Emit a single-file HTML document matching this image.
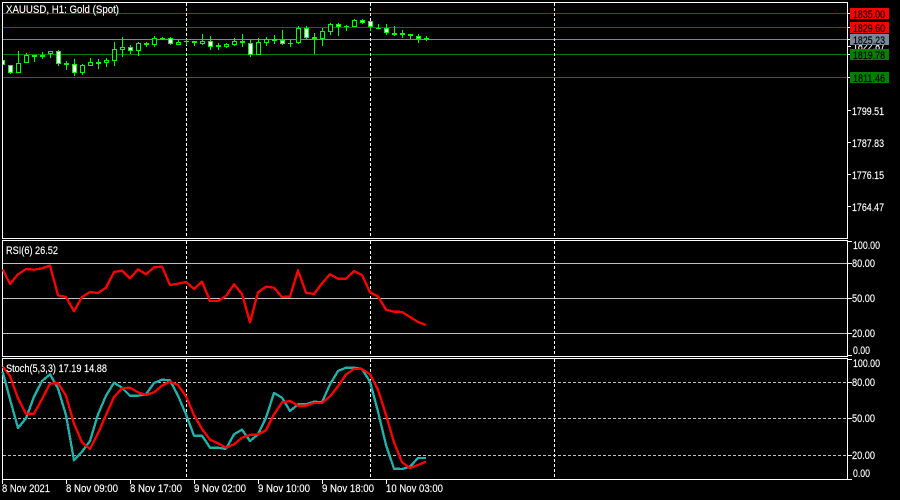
<!DOCTYPE html>
<html><head><meta charset="utf-8"><style>
html,body{margin:0;padding:0;background:#000;width:900px;height:500px;overflow:hidden}
svg{display:block}
text{font-family:"Liberation Sans",sans-serif;font-size:11px;fill:#fff;stroke:#fff;stroke-width:.15px}
.b{fill:#000}
</style></head><body>
<svg width="900" height="500" viewBox="0 0 900 500" xmlns="http://www.w3.org/2000/svg">
<rect width="900" height="500" fill="#000"/>
<g shape-rendering="crispEdges">
<path d="M3 13.5H847M3 27.5H847" stroke="#e00000"/>
<path d="M3 39.5H847" stroke="#778899"/>
<path d="M3 54.5H847M3 77.5H847" stroke="#008000"/>
<path d="M3 263.5H847M3 298.5H847M3 333.5H847" stroke="#c0c0c0"/>
<path d="M3 382.5H847M3 418.5H847M3 455.5H847" stroke="#c0c0c0" stroke-dasharray="3 2"/>
<path d="M186.5 3V238M370.5 3V238M554.5 3V238M186.5 241V356M370.5 241V356M554.5 241V356M186.5 359V479M370.5 359V479M554.5 359V479" stroke="#fff" stroke-dasharray="3 2"/>
<path stroke="#00ff00" fill="none" d="M2.500 60V66M10.500 65V74M18.500 51V73M26.500 53V63M34.500 55V62M42.500 52V59M50.500 51V58M58.500 50V66M66.500 61V70M74.500 59V76M82.500 64V75M90.500 58V66M98.500 59V69M106.500 58V67M114.500 42V66M122.500 37V57M130.500 45V54M138.500 42V56M146.500 42V47M154.500 36V47M162.500 37V40M170.500 37V45M178.500 40V45M186.500 39V45M194.500 41V46M202.500 34V45M210.500 36V50M218.500 43V50M226.500 43V48M234.500 38V46M242.500 34V47M250.500 40V57M258.500 38V55M266.500 37V46M274.500 35V44M282.500 30V45M290.500 40V47M298.500 26V44M306.500 26V39M314.500 33V54M322.500 28V46M330.500 23V35M338.500 23V36M346.500 25V31M354.500 19V27M362.500 19V24M370.500 21V31M378.500 24V29M386.500 24V35M394.500 26V36M402.500 30V38M410.500 34V39M418.500 34V43M426.500 36V41"/>
<path stroke="#00ff00" fill="none" d="M96 63.500H101M96 62.500H101M184 41.500H189M216 46.500H221M216 45.500H221M272 40.500H277M272 39.500H277M288 43.500H293M312 38.500H317M312 37.500H317M344 26.500H349M376 28.500H381M400 34.500H405M400 33.500H405M424 39.500H429M424 38.500H429M64 63.500H69M64 64.500H69M144 43.500H149M144 44.500H149M160 38.500H165M392 33.500H397M392 34.500H397M32 55.500H37M32 56.500H37"/>
<g fill="#000" stroke="#00ff00">
<rect x="16.500" y="63.500" width="4" height="9"/>
<rect x="24.500" y="55.500" width="4" height="7"/>
<rect x="40.500" y="55.500" width="4" height="1"/>
<rect x="48.500" y="51.500" width="4" height="2"/>
<rect x="80.500" y="65.500" width="4" height="7"/>
<rect x="88.500" y="62.500" width="4" height="3"/>
<rect x="104.500" y="60.500" width="4" height="2"/>
<rect x="112.500" y="49.500" width="4" height="11"/>
<rect x="120.500" y="47.500" width="4" height="2"/>
<rect x="136.500" y="43.500" width="4" height="7"/>
<rect x="152.500" y="38.500" width="4" height="6"/>
<rect x="176.500" y="42.500" width="4" height="2"/>
<rect x="200.500" y="41.500" width="4" height="2"/>
<rect x="224.500" y="44.500" width="4" height="2"/>
<rect x="232.500" y="41.500" width="4" height="3"/>
<rect x="256.500" y="42.500" width="4" height="12"/>
<rect x="264.500" y="39.500" width="4" height="3"/>
<rect x="296.500" y="28.500" width="4" height="14"/>
<rect x="320.500" y="31.500" width="4" height="7"/>
<rect x="328.500" y="24.500" width="4" height="7"/>
<rect x="352.500" y="20.500" width="4" height="6"/>
</g>
<g fill="#fff" stroke="#00ff00">
<rect x="0.500" y="60.500" width="4" height="4"/>
<rect x="8.500" y="65.500" width="4" height="7"/>
<rect x="56.500" y="51.500" width="4" height="12"/>
<rect x="72.500" y="64.500" width="4" height="8"/>
<rect x="128.500" y="47.500" width="4" height="3"/>
<rect x="168.500" y="38.500" width="4" height="5"/>
<rect x="192.500" y="41.500" width="4" height="1"/>
<rect x="208.500" y="41.500" width="4" height="5"/>
<rect x="240.500" y="41.500" width="4" height="1"/>
<rect x="248.500" y="43.500" width="4" height="11"/>
<rect x="280.500" y="40.500" width="4" height="3"/>
<rect x="304.500" y="28.500" width="4" height="9"/>
<rect x="336.500" y="24.500" width="4" height="2"/>
<rect x="360.500" y="20.500" width="4" height="2"/>
<rect x="368.500" y="21.500" width="4" height="5"/>
<rect x="384.500" y="28.500" width="4" height="4"/>
<rect x="408.500" y="34.500" width="4" height="1"/>
<rect x="416.500" y="36.500" width="4" height="2"/>
</g>
<rect x="0" y="0" width="2" height="500" fill="#000"/>
<!-- frames -->
<g fill="none" stroke="#fff">
<rect x="2.500" y="2.500" width="845" height="236"/>
<rect x="2.500" y="240.500" width="845" height="116"/>
<path d="M2.500 358.500H847.500V479.500H2.500Z"/>
<path d="M847 46.500H851M847 110.500H851M847 142.500H851M847 174.500H851M847 206.500H851"/>
<path d="M847 13.500H850M847 27.500H850M847 39.500H850M847 54.500H850M847 77.500H850"/>
<path d="M847 241.500H852M847 263.500H852M847 298.500H852M847 333.500H852M847 355.500H852"/>
<path d="M847 359.500H852M847 382.500H852M847 418.500H852M847 455.500H852M847 479.500H852"/>
<path d="M2.500 480V484M66.500 480V484M130.500 480V484M194.500 480V484M258.500 480V484M322.500 480V484M386.500 480V484"/>
</g>
</g>
<!-- indicator lines -->
<g fill="none" stroke-width="7" shape-rendering="crispEdges" stroke-linejoin="round">
<polyline transform="translate(0 235) scale(.33333)" stroke="#ff0000" points="8,103 30,147 54,118 78,102 102,104 126,100 150,92 174,181 198,186 222,229 246,186 270,171 294,174 318,158 342,111 366,107 390,130 414,103 438,118 462,97 486,95 510,150 534,146 558,141 582,162 606,140 630,198 654,198 678,183 "/>
<polyline transform="translate(225 235) scale(.33333)" stroke="#ff0000" points="3,183 27,148 51,177 75,262 99,172 123,155 147,158 171,186 195,185 219,106 243,173 267,177 291,145 315,118 339,131 363,131 387,108 411,120 435,172 459,184 483,224 507,230 531,231 555,246 579,261 603,270"/>
<polyline transform="translate(0 355) scale(.33333)" stroke="#20b2aa" points="8,50 30,133 54,219 78,190 102,125 126,78 150,58 174,100 198,180 222,316 246,290 270,258 294,178 318,122 342,83 366,98 390,122 414,122 438,118 462,84 486,74 510,76 534,122 558,178 582,242 606,242 630,278 654,278 678,282"/>
<polyline transform="translate(225 355) scale(.33333)" stroke="#20b2aa" points="3,282 27,238 51,224 75,258 99,238 123,188 147,114 171,128 195,168 219,148 243,148 267,140 291,142 315,88 339,48 363,38 387,38 411,42 435,80 459,170 483,270 507,341 531,342 555,335 579,309 603,309"/>
<polyline transform="translate(0 355) scale(.33333)" stroke="#ff0000" points="8,35 30,63 54,130 78,176 102,176 126,132 150,86 174,84 198,122 222,206 246,262 270,282 294,235 318,180 342,126 366,100 390,98 414,112 438,120 462,112 486,92 510,80 534,90 558,124 582,180 606,222 630,254 654,265 678,278"/>
<polyline transform="translate(225 355) scale(.33333)" stroke="#ff0000" points="3,278 27,268 51,248 75,240 99,238 123,226 147,178 171,142 195,138 219,152 243,152 267,144 291,144 315,124 339,94 363,58 387,42 411,42 435,58 459,104 483,180 507,262 531,322 555,339 579,330 603,320"/>
</g>
<!-- labels -->
<text x="6" y="13" textLength="113" lengthAdjust="spacingAndGlyphs">XAUUSD, H1:  Gold (Spot)</text>
<text x="6" y="254" textLength="52" lengthAdjust="spacingAndGlyphs">RSI(6) 26.52</text>
<text x="6" y="372" textLength="101" lengthAdjust="spacingAndGlyphs">Stoch(5,3,3) 17.19 14.88</text>
<!-- price axis -->
<g>
<text x="853" y="50" textLength="32" lengthAdjust="spacingAndGlyphs">1822.87</text>
<text x="852" y="115" textLength="32" lengthAdjust="spacingAndGlyphs">1799.51</text>
<text x="852" y="147" textLength="32" lengthAdjust="spacingAndGlyphs">1787.83</text>
<text x="852" y="179" textLength="32" lengthAdjust="spacingAndGlyphs">1776.15</text>
<text x="852" y="211" textLength="32" lengthAdjust="spacingAndGlyphs">1764.47</text>
<text x="853" y="249" textLength="27" lengthAdjust="spacingAndGlyphs">100.00</text>
<text x="852" y="267" textLength="23" lengthAdjust="spacingAndGlyphs">80.00</text>
<text x="852" y="302" textLength="23" lengthAdjust="spacingAndGlyphs">50.00</text>
<text x="852" y="337" textLength="23" lengthAdjust="spacingAndGlyphs">20.00</text>
<text x="853" y="354" textLength="17" lengthAdjust="spacingAndGlyphs">0.00</text>
<text x="853" y="367" textLength="27" lengthAdjust="spacingAndGlyphs">100.00</text>
<text x="852" y="386" textLength="23" lengthAdjust="spacingAndGlyphs">80.00</text>
<text x="852" y="422" textLength="23" lengthAdjust="spacingAndGlyphs">50.00</text>
<text x="852" y="459" textLength="23" lengthAdjust="spacingAndGlyphs">20.00</text>
<text x="853" y="477" textLength="17" lengthAdjust="spacingAndGlyphs">0.00</text>
</g>
<g shape-rendering="crispEdges">
<rect x="850" y="8" width="39" height="11" fill="#ff0000"/>
<rect x="850" y="22" width="39" height="11" fill="#ff0000"/>
<rect x="850" y="34" width="39" height="11" fill="#778899"/>
<rect x="850" y="49" width="39" height="11" fill="#008000"/>
<rect x="850" y="72" width="39" height="11" fill="#008000"/>
</g>
<g>
<text style="fill:#000;stroke:#000" x="853" y="18" textLength="32" lengthAdjust="spacingAndGlyphs">1835.00</text>
<text style="fill:#000;stroke:#000" x="853" y="32" textLength="32" lengthAdjust="spacingAndGlyphs">1829.60</text>
<text style="fill:#000;stroke:#000" x="853" y="44" textLength="32" lengthAdjust="spacingAndGlyphs">1825.23</text>
<text style="fill:#000;stroke:#000" x="853" y="59" textLength="32" lengthAdjust="spacingAndGlyphs">1819.78</text>
<text style="fill:#000;stroke:#000" x="853" y="82" textLength="32" lengthAdjust="spacingAndGlyphs">1811.46</text>
</g>
<!-- time axis -->
<text x="2" y="492" textLength="48" lengthAdjust="spacingAndGlyphs">8 Nov 2021</text>
<text x="66" y="492" textLength="52" lengthAdjust="spacingAndGlyphs">8 Nov 09:00</text>
<text x="130" y="492" textLength="52" lengthAdjust="spacingAndGlyphs">8 Nov 17:00</text>
<text x="194" y="492" textLength="52" lengthAdjust="spacingAndGlyphs">9 Nov 02:00</text>
<text x="258" y="492" textLength="52" lengthAdjust="spacingAndGlyphs">9 Nov 10:00</text>
<text x="322" y="492" textLength="52" lengthAdjust="spacingAndGlyphs">9 Nov 18:00</text>
<text x="386" y="492" textLength="57" lengthAdjust="spacingAndGlyphs">10 Nov 03:00</text>
</svg>
</body></html>
